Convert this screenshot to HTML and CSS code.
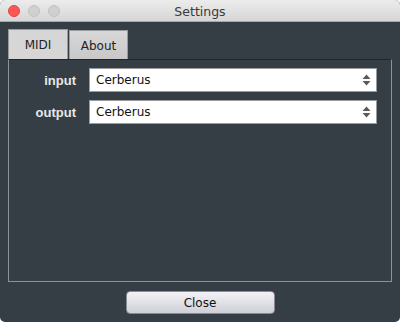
FILE: index.html
```html
<!DOCTYPE html>
<html lang="en">
<head>
<meta charset="UTF-8">
<title>Settings</title>
<link rel="stylesheet" href="styles.css">
</head>
<body>
<div class="window">
    <div class="titlebar">
        <div class="lights">
            <span class="light red"></span>
            <span class="light"></span>
            <span class="light"></span>
        </div>
        <div class="title">Settings</div>
    </div>
    <div class="content">
        <div class="tabs">
            <div class="tab active">MIDI</div>
            <div class="tab">About</div>
        </div>
        <div class="panel">
            <div class="form">
                <label class="label">input</label>
                <div class="select">
                    <span>Cerberus</span>
                    <svg class="arrows" width="9" height="12" viewBox="0 0 9 12"><path d="M4.5 0.5 L8.5 5 L0.5 5 Z M0.5 7 L8.5 7 L4.5 11.5 Z" fill="#5a5a5a"/></svg>
                </div>
                <label class="label">output</label>
                <div class="select">
                    <span>Cerberus</span>
                    <svg class="arrows" width="9" height="12" viewBox="0 0 9 12"><path d="M4.5 0.5 L8.5 5 L0.5 5 Z M0.5 7 L8.5 7 L4.5 11.5 Z" fill="#5a5a5a"/></svg>
                </div>
            </div>
        </div>
        <div class="footer">
            <button class="btn">Close</button>
        </div>
    </div>
</div>
</body>
</html>
```

FILE: styles.css
```css
html, body {
    margin: 0;
    padding: 0;
    background: #ffffff;
}

body {
    font-family: "DejaVu Sans", "Liberation Sans", sans-serif;
    font-size: 12px;
}

.window {
    width: 400px;
    height: 322px;
    background-color: #343e44;
    border-radius: 5px;
    overflow: hidden;
    display: flex;
    flex-direction: column;
}

.titlebar {
    height: 21px;
    background: linear-gradient(#ececec, #d6d6d6);
    border-bottom: 1px solid #a8a8a8;
    position: relative;
    display: flex;
    align-items: center;
    justify-content: center;
}

.lights {
    position: absolute;
    left: 8px;
    top: 5px;
    display: flex;
    gap: 8px;
}

.light {
    width: 12px;
    height: 12px;
    border-radius: 50%;
    background: #d0d0d0;
    box-sizing: border-box;
    border: 1px solid #c0c0c0;
}

.light.red {
    background: #fc5753;
    border-color: #df4744;
}

.title {
    color: #3a3a3a;
    font-size: 12.5px;
    padding-top: 1px;
}

.content {
    flex: 1;
    display: flex;
    flex-direction: column;
    padding: 7px 8px 8px 8px;
}

.tabs {
    display: flex;
    align-items: flex-end;
    gap: 1px;
    height: 30px;
}

.tab {
    box-sizing: border-box;
    width: 60px;
    height: 30px;
    border: 1px solid #9a9a9a;
    border-bottom: none;
    background: linear-gradient(#dcdcdc, #d2d2d2);
    color: #222;
    display: flex;
    align-items: center;
    justify-content: center;
    padding-top: 1px;
}

.tab.active {
    background: #d6d6d6;
}

.tab:not(.active) {
    width: 59px;
    height: 29px;
    background: linear-gradient(#d8d8d8, #c8c8c8);
}

.panel {
    box-sizing: border-box;
    height: 223px;
    border: 1px solid #8c9296;
    border-top-color: #1f272b;
    padding: 8px 14px 8px 0;
}

.form {
    display: grid;
    grid-template-columns: 67px 1fr;
    column-gap: 13px;
    row-gap: 8px;
    align-items: center;
}

.label {
    text-align: right;
    font-family: "Liberation Sans", Arial, sans-serif;
    font-size: 13px;
    font-weight: bold;
    color: #e8e8e8;
}

.select {
    box-sizing: border-box;
    height: 24px;
    background: #fff;
    border: 1px solid #9a9a9a;
    display: flex;
    align-items: center;
    justify-content: space-between;
    padding: 0 5px 0 6px;
    color: #111;
}

.footer {
    display: flex;
    justify-content: center;
    padding-top: 9px;
}

.btn {
    width: 149px;
    height: 23px;
    border: 1px solid #8a8a90;
    border-radius: 4px;
    background: linear-gradient(#f2f2f6, #cfcfd8);
    font-family: "DejaVu Sans", "Liberation Sans", sans-serif;
    font-size: 12px;
    color: #111;
    padding: 0;
}
```
